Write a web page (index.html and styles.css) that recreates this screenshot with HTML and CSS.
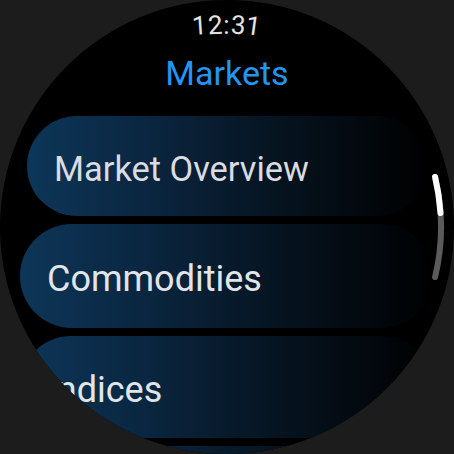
FILE: index.html
```html
<!DOCTYPE html>
<html>
<head>
<meta charset="utf-8">
<link rel="stylesheet" href="styles.css">
</head>
<body>
<div class="screen">
  <div class="time">
    <span class="ch c1">1</span><span class="ch c2">2</span><span class="ch c3">:</span><span class="ch c4">3</span><span class="ch c5">1</span>
  </div>
  <div class="title">Markets</div>
  <div class="list">
    <div class="chip chip-small"><span class="label">Market Overview</span></div>
    <div class="chip"><span class="label">Commodities</span></div>
    <div class="chip chip-3"><span class="label">Indices</span></div>
    <div class="chip"></div>
  </div>
  <svg class="scrollbar" width="454" height="454" viewBox="0 0 454 454">
    <path d="M 435.1 177 A 214 214 0 0 1 435.1 277" fill="none" stroke="#5b5b5b" stroke-width="6" stroke-linecap="round"/>
    <path d="M 435.1 177 A 214 214 0 0 1 440.5 213" fill="none" stroke="#ffffff" stroke-width="6" stroke-linecap="round"/>
  </svg>
</div>
</body>
</html>
```

FILE: styles.css
```css
html, body {
  margin: 0;
  padding: 0;
  background: #1c1c1c;
}

body {
  width: 454px;
  height: 454px;
  overflow: hidden;
  font-family: Roboto, "Noto Sans", "Liberation Sans", sans-serif;
}

.screen {
  position: relative;
  width: 454px;
  height: 454px;
  border-radius: 50%;
  background: #000;
  overflow: hidden;
  display: flex;
  flex-direction: column;
  align-items: center;
}

.time {
  margin-top: 12px;
  height: 26px;
  font-size: 26px;
  line-height: 26px;
  color: #e4e4e4;
  display: flex;
  letter-spacing: 1px;
}

.ch {
  display: inline-block;
}

.c1 { transform: translateY(0.5px) rotate(-4deg); }
.c2 { transform: rotate(-2deg); }
.c3 { transform: rotate(0deg); }
.c4 { transform: rotate(3deg); }
.c5 { transform: translateY(1px) rotate(8deg); }

.title {
  margin-top: 18px;
  font-size: 34px;
  line-height: 34px;
  height: 34px;
  color: #2196f3;
}

.list {
  margin-top: 26px;
  display: flex;
  flex-direction: column;
  align-items: center;
  gap: 8px;
}

.chip {
  width: 414px;
  height: 104px;
  box-sizing: border-box;
  border-radius: 52px;
  background: linear-gradient(90deg, #0d3658 0%, #0a2640 30%, #061522 60%, #000000 100%);
  display: flex;
  align-items: center;
  padding: 5px 0 0 27px;
  flex-shrink: 0;
}

.chip-small {
  width: 400px;
  height: 100px;
  border-radius: 50px;
}

.chip-3 {
  height: 102px;
}

.label {
  font-size: 36px;
  color: #e2e5e8;
  white-space: nowrap;
}

.chip-small .label {
  font-size: 34.4px;
  color: #d9dce0;
}

.scrollbar {
  position: absolute;
  left: 0;
  top: 0;
  pointer-events: none;
}
```
